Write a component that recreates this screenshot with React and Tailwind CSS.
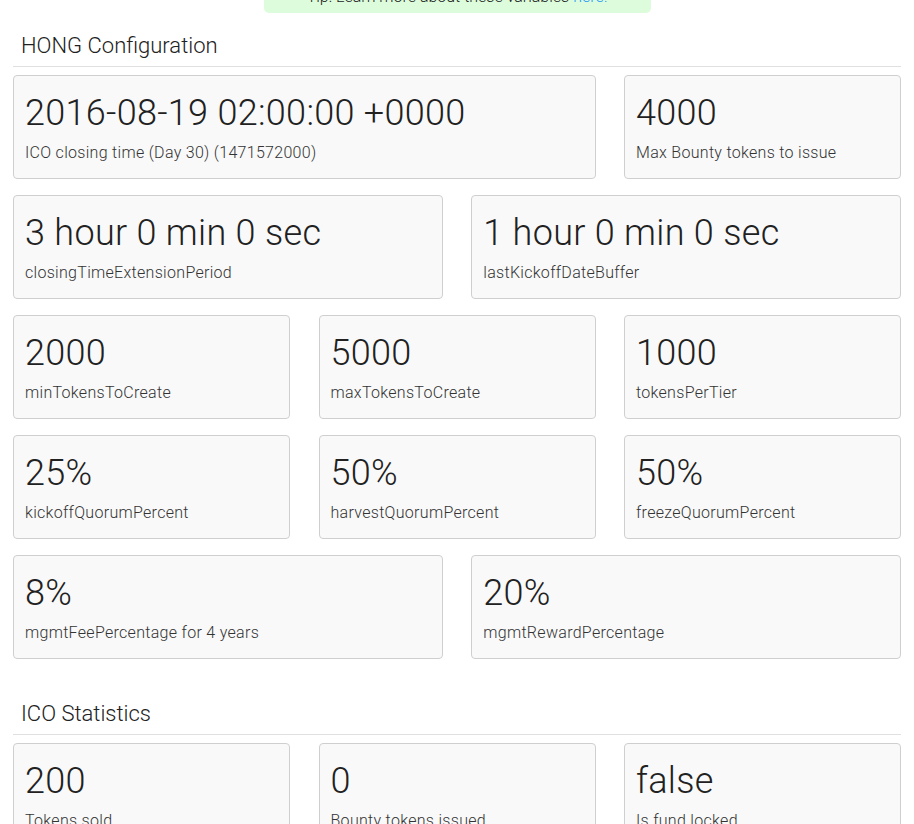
import React from 'react';

// HONG fund dashboard: configuration + ICO statistics cards
const CONFIG_ITEMS = [
  { key: 'closing', value: '2016-08-19 02:00:00 +0000', label: 'ICO closing time (Day 30) (1471572000)', span: 'col-span-8' },
  { key: 'bounty', value: '4000', label: 'Max Bounty tokens to issue', span: 'col-span-4' },
  { key: 'extension', value: '3 hour 0 min 0 sec', label: 'closingTimeExtensionPeriod', span: 'col-span-6' },
  { key: 'kickoffBuffer', value: '1 hour 0 min 0 sec', label: 'lastKickoffDateBuffer', span: 'col-span-6' },
  { key: 'minTokens', value: '2000', label: 'minTokensToCreate', span: 'col-span-4' },
  { key: 'maxTokens', value: '5000', label: 'maxTokensToCreate', span: 'col-span-4' },
  { key: 'tier', value: '1000', label: 'tokensPerTier', span: 'col-span-4' },
  { key: 'kickoffQuorum', value: '25%', label: 'kickoffQuorumPercent', span: 'col-span-4' },
  { key: 'harvestQuorum', value: '50%', label: 'harvestQuorumPercent', span: 'col-span-4' },
  { key: 'freezeQuorum', value: '50%', label: 'freezeQuorumPercent', span: 'col-span-4' },
  { key: 'fee', value: '8%', label: 'mgmtFeePercentage for 4 years', span: 'col-span-6' },
  { key: 'reward', value: '20%', label: 'mgmtRewardPercentage', span: 'col-span-6' },
];

const STATS_ITEMS = [
  { key: 'sold', value: '200', label: 'Tokens sold', span: 'col-span-4' },
  { key: 'bountyIssued', value: '0', label: 'Bounty tokens issued', span: 'col-span-4' },
  { key: 'locked', value: 'false', label: 'Is fund locked', span: 'col-span-4' },
];

const StatCard = ({ item }) => (
  <div className={`${item.span} bg-[#f9f9f9] border border-[#cfcfcf] rounded-[4px] px-[11px] pt-[16px] pb-[15px]`}>
    <div className="text-[36px] leading-[43px] font-light tracking-[0.3px] text-[#212121]">{item.value}</div>
    <div className="text-[16px] leading-[20px] font-light tracking-[0.3px] text-[#333] mt-[8px]">{item.label}</div>
  </div>
);

const Section = ({ title, items, className }) => (
  <section className={className}>
    <h2 className="text-[22px] leading-[25px] font-light text-[#212121] pl-2 pb-2 border-b border-[#e0e0e0]">
      {title}
    </h2>
    <div className="grid grid-cols-12 gap-x-[28.5px] gap-y-4 mt-2">
      {items.map((item) => (
        <StatCard key={item.key} item={item} />
      ))}
    </div>
  </section>
);

export default function App() {
  return (
    <div className="min-h-screen bg-white overflow-hidden font-['Roboto','Liberation_Sans',sans-serif]">
      {/* Tip banner, mostly scrolled off the top */}
      <div className="flex justify-center">
        <div className="-mt-[19px] w-[387px] bg-[#dcfcdc] rounded-b-[5px] py-1 text-center text-[16px] leading-[24px] font-light text-[#222]">
          Tip: Learn more about these variables <a className="text-[#2196f3]">here!</a>
        </div>
      </div>

      <div className="px-[13px]">
        <Section title="HONG Configuration" items={CONFIG_ITEMS} className="mt-5" />
        <Section title="ICO Statistics" items={STATS_ITEMS} className="mt-[42px]" />
      </div>
    </div>
  );
}
